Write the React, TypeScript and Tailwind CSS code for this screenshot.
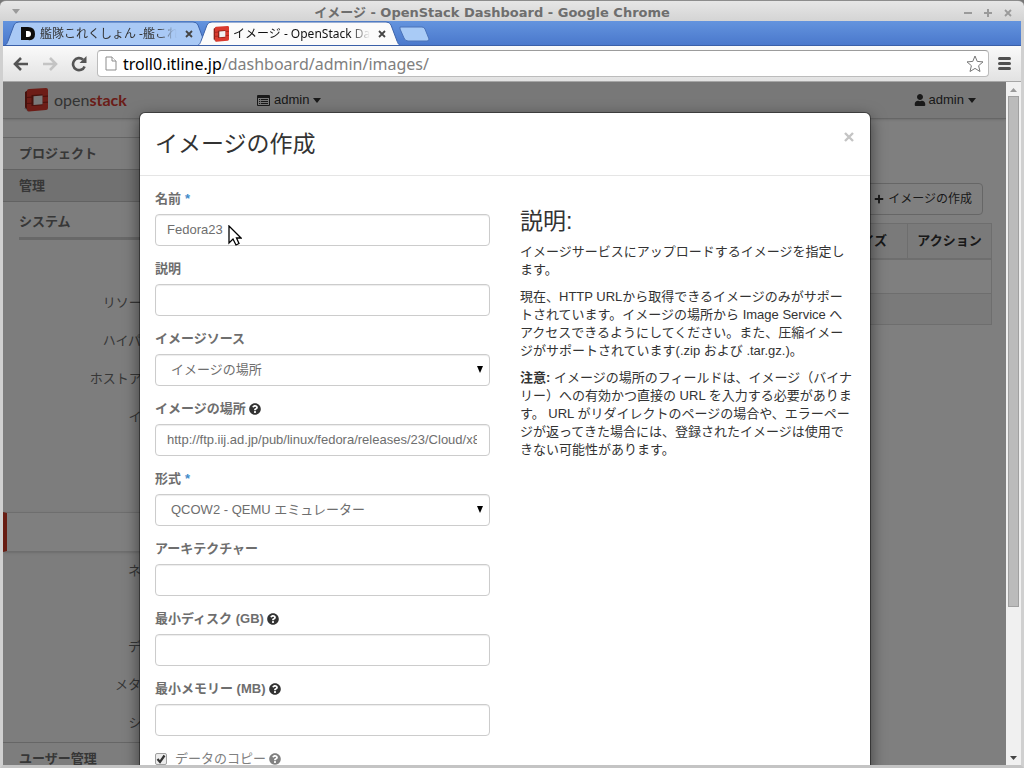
import React from "react";
import { FaPlus, FaQuestionCircle, FaUser } from "react-icons/fa";

const TAB_FONT = "font-['Noto_Sans','Noto_Sans_CJK_JP',sans-serif]";

const navItems = [
  { label: "概要" },
  { label: "リソース使用状況" },
  { label: "ハイパーバイザー" },
  { label: "ホストアグリゲート" },
  { label: "インスタンス" },
  { label: "ボリューム" },
  { label: "フレーバー" },
  { label: "イメージ", active: true },
  { label: "ネットワーク" },
  { label: "ルーター" },
  { label: "デフォルト値" },
  { label: "メタデータ定義" },
  { label: "システム情報" },
];

function OpenStackMark({ className }: { className: string }) {
  return (
    <svg viewBox="0 0 24 24" className={className} aria-hidden="true">
      <path d="M0 20l4 3.500 3-1-3-3z" fill="#000" opacity="0.25" />
      <path d="M1 4l3-2v20l-3-2.500z" fill="#8e2219" />
      <path d="M3 3Q3 1 5 1l17-1q2 0 2 2v18q0 2-2 2L5 23.500q-2 0-2-2z" fill="#da3a2e" />
      <path d="M3 9.500l5-.4M18 8.500l6-.4M3 15.500l5-.2M18 14.500l6-.4" stroke="#9a2319" strokeWidth="1.1" />
      <path d="M7.500 7l11-.8v11l-11 .8z" fill="#8e2219" />
      <path d="M9.500 8.200l9-.7v8.800l-9 .7z" fill="#f2f2f2" />
    </svg>
  );
}

function CloseGlyph({ className }: { className: string }) {
  return (
    <svg viewBox="0 0 8 8" className={className} aria-hidden="true">
      <path d="M1 1l6 6M7 1L1 7" stroke="currentColor" strokeWidth="1.8" />
    </svg>
  );
}

function TitleBar() {
  return (
    <header className="flex h-[21px] shrink-0 items-center overflow-hidden rounded-t-md border-t border-[#8c8c8c] bg-linear-to-b from-[#e6e6e6] to-[#d4d4d4] px-3 text-[#9a9a9a]">
      <div className="w-16">
        <svg viewBox="0 0 8 5" className="h-[5px] w-2" aria-hidden="true">
          <path d="M0 0h8L4 5z" fill="currentColor" />
        </svg>
      </div>
      <h1 className="flex-1 pt-1 pr-10 text-center font-['DejaVu_Sans','Noto_Sans_CJK_JP',sans-serif] text-[13px] leading-5 font-bold whitespace-nowrap text-[#6e6e6e]">
        イメージ - OpenStack Dashboard - Google Chrome
      </h1>
      <div className="flex w-16 items-center justify-end gap-3 pt-1">
        <button type="button" aria-label="最小化">
          <svg viewBox="0 0 8 8" className="size-2"><path d="M0 4h8" stroke="currentColor" strokeWidth="2" /></svg>
        </button>
        <button type="button" aria-label="最大化">
          <svg viewBox="0 0 8 8" className="size-2"><path d="M0 4h8M4 0v8" stroke="currentColor" strokeWidth="2" /></svg>
        </button>
        <button type="button" aria-label="閉じる">
          <CloseGlyph className="size-2" />
        </button>
      </div>
    </header>
  );
}

function Tab({ title, active, icon }: { title: string; active?: boolean; icon: React.ReactNode }) {
  return (
    <div className={active ? "relative z-10 -ml-[13px] h-[25px] w-[206px]" : "relative h-[25px] w-[206px]"}>
      <svg viewBox="0 0 206 25" preserveAspectRatio="none" className="absolute inset-0 size-full" aria-hidden="true">
        <path
          d="M0 25C4 24 4 22 5 20L11 4Q12 1 16 1H190Q194 1 195 4L201 20C202 22 202 24 206 25z"
          fill={active ? "#fbfbfb" : "#a9c9f5"}
          stroke="#3d64ac"
          strokeWidth="1"
        />
      </svg>
      <div className="relative flex h-full items-center pr-4 pl-[17px]">
        {icon}
        <span
          className={
            (active ? "text-[#111] " : "text-[#333] ") +
            "ml-1 flex-1 overflow-hidden mask-r-from-85% text-xs whitespace-nowrap " +
            TAB_FONT
          }
        >
          {title}
        </span>
        <button type="button" aria-label="タブを閉じる" className="ml-2 text-[#444]">
          <CloseGlyph className="size-2" />
        </button>
      </div>
    </div>
  );
}

function TabStrip() {
  return (
    <nav className="flex h-[25px] shrink-0 overflow-hidden border-b border-[#3a5fa8] bg-linear-to-b from-[#6494de] to-[#4a78cc]">
      <Tab
        title="艦隊これくしょん -艦これ"
        icon={
          <svg viewBox="0 0 16 16" className="size-4 shrink-0" aria-hidden="true">
            <path d="M1 1h7q7 0 7 7t-7 6H1z" fill="#0c0c0c" />
            <path d="M6 5h2q3 0 3 3t-3 3H6z" fill="#fff" />
          </svg>
        }
      />
      <Tab active title="イメージ - OpenStack Dashboard" icon={<OpenStackMark className="size-4 shrink-0" />} />
      <button type="button" aria-label="新しいタブ" className="-ml-1 h-6">
        <svg viewBox="0 0 32 24" className="h-6 w-8">
          <path d="M2 6h22q2 0 3 2l4 10q0 2-2 2H10q-3 0-4-3L2 8z" fill="#a9cbf6" stroke="#4a72b8" strokeWidth="1" />
        </svg>
      </button>
    </nav>
  );
}

function Toolbar() {
  return (
    <div className="flex h-9 shrink-0 items-center border-b border-[#a6a6a6] bg-linear-to-b from-[#fafafa] to-[#e2e2e2] px-[10px] text-[#555]">
      <button type="button" aria-label="戻る">
        <svg viewBox="0 0 16 14" className="h-[14px] w-4" fill="none" stroke="currentColor" strokeWidth="2.6">
          <path d="M15 7H3M8 1L2 7l6 6" />
        </svg>
      </button>
      <button type="button" aria-label="進む" className="ml-[13px] text-[#c4c4c4]">
        <svg viewBox="0 0 16 14" className="h-[14px] w-4" fill="none" stroke="currentColor" strokeWidth="2.6">
          <path d="M1 7h12M8 1l6 6-6 6" />
        </svg>
      </button>
      <button type="button" aria-label="再読み込み" className="ml-[13px]">
        <svg viewBox="0 0 16 16" className="size-4" fill="none">
          <path d="M13.6 10.4A6 6 0 1 1 12 3.6" stroke="currentColor" strokeWidth="2.6" />
          <path d="M15.5 0v7h-7z" fill="currentColor" />
        </svg>
      </button>
      <div className="ml-[10px] flex h-[27px] flex-1 items-center rounded-sm border border-t-[#9c9c9c] border-[#bcbcbc] bg-white pr-1 pl-[7px]">
        <svg viewBox="0 0 12 15" className="h-[15px] w-3" fill="#fff" stroke="#8d8d8d" aria-hidden="true">
          <path d="M1 1h6l4 4v9H1z" />
          <path d="M7 1v4h4" />
        </svg>
        <a href="#url" className={"ml-[6px] flex-1 text-base leading-5 text-[#808080] " + TAB_FONT}>
          <span className="text-black">troll0.itline.jp</span>/dashboard/admin/images/
        </a>
        <button type="button" aria-label="ブックマーク">
          <svg viewBox="0 0 18 18" className="size-[18px]" fill="#fff" stroke="#777" strokeLinejoin="round">
            <path d="M9 1l2.2 5.4 5.8.5-4.4 3.8L14 16.500 9 13.400 4 16.500l1.400-5.800L1 6.900l5.800-.5z" />
          </svg>
        </button>
      </div>
      <button type="button" aria-label="メニュー" className="ml-[9px]">
        <svg viewBox="0 0 13 13" className="size-[13px]" stroke="#505050" strokeWidth="3" strokeLinecap="round">
          <path d="M1.500 1.500h10M1.500 6.500h10M1.500 11.500h10" />
        </svg>
      </button>
    </div>
  );
}

function Caret() {
  return (
    <svg viewBox="0 0 8 5" className="ml-1 h-[5px] w-2" aria-hidden="true">
      <path d="M0 0h8L4 5z" fill="currentColor" />
    </svg>
  );
}

function Navbar() {
  return (
    <div className="flex h-[37px] items-center border-b border-[#ccc] bg-[#f0f0f0] text-[#333] shadow-sm">
      <a href="#home" className="ml-[21px] flex w-[233px] items-center">
        <OpenStackMark className="size-6" />
        <span className="ml-[6px] font-['Lato','Open_Sans',sans-serif] text-base leading-6 text-[#666]">
          open<span className="font-bold text-[#d43a30]">stack</span>
        </span>
      </a>
      <button type="button" className="flex items-center">
        <svg viewBox="0 0 13 11" className="h-[11px] w-[13px]" aria-hidden="true">
          <path d="M1 0h11q1 0 1 1v9q0 1-1 1H1q-1 0-1-1V1q0-1 1-1zM1 3v7h11V3z" fill="currentColor" fillRule="evenodd" />
          <path d="M2 4.500h1.200M4 4.500h7M2 6.500h1.200M4 6.500h7M2 8.500h1.200M4 8.500h7" stroke="currentColor" />
        </svg>
        <span className="ml-1">admin</span>
        <Caret />
      </button>
      <button type="button" className="mr-[30px] ml-auto flex items-center">
        <FaUser className="size-3" />
        <span className="ml-[3px]">admin</span>
        <Caret />
      </button>
    </div>
  );
}

function Sidebar() {
  return (
    <nav className="mt-[18px] w-[220px] shrink-0 border-r border-[#ddd] bg-[#fafafa] text-[#6e6e6e]">
      <a href="#project" className="flex h-8 items-center border-t border-[#ccc] px-4 font-bold">プロジェクト</a>
      <a href="#admin" className="flex h-[33px] items-center border-y border-[#c4c4c4] bg-[#e3e3e3] px-4 font-bold">管理</a>
      <div className="ml-4 h-[38px] border-b-3 border-[#d0d0d0] pt-[11px] font-bold">システム</div>
      <ul className="mt-[6px]">
        {navItems.map((item) =>
          item.active ? (
            <li key={item.label} className="flex h-10 items-center justify-end border-y border-l-4 border-y-[#ddd] border-l-[#d13a26] bg-white pr-4 shadow-sm">
              <a href="#images">{item.label}</a>
            </li>
          ) : (
            <li key={item.label} className="flex h-[38px] items-center justify-end pr-4">
              <a href="#panel">{item.label}</a>
            </li>
          )
        )}
      </ul>
      <a href="#identity" className="flex h-8 items-center border-t border-[#ccc] px-4 font-bold">ユーザー管理</a>
    </nav>
  );
}

function ImagesPanel() {
  return (
    <main className="flex-1 pt-16 pr-[14px] pl-4">
      <button type="button" className="mr-[9px] ml-auto flex h-8 items-center rounded-sm border border-[#ccc] px-[10px] text-xs text-[#333]">
        <FaPlus className="size-[10px]" />
        <span className="ml-1">イメージの作成</span>
      </button>
      <table className="mt-2 w-full border-collapse border border-[#ddd] text-left text-[#333]">
        <thead>
          <tr className="h-[35px] border-b-2 border-[#ddd] bg-[#f5f5f5]">
            <th className="px-2 text-right">
              <span className="pr-3">サイズ</span>
            </th>
            <th className="w-[84px] border-l border-[#ddd] text-center">アクション</th>
          </tr>
        </thead>
        <tbody>
          <tr className="h-[35px]">
            <td colSpan={2} />
          </tr>
        </tbody>
        <tfoot>
          <tr className="h-[31px] border-t border-[#ddd] bg-[#f5f5f5]">
            <td colSpan={2} />
          </tr>
        </tfoot>
      </table>
    </main>
  );
}

const CONTROL =
  "block h-8 w-full rounded-sm border border-[#ccc] bg-white text-[13px] text-[#6e6e6e] shadow-[inset_0_1px_1px_rgba(0,0,0,0.075)] outline-none";

type FieldProps = { id: string; label: string; required?: boolean; help?: boolean; value?: string; options?: string[] };

function Field({ id, label, required, help, value, options }: FieldProps) {
  return (
    <div className="mb-[14px]">
      <label htmlFor={id} className="mb-[6px] flex h-[18px] items-center font-bold text-[#6e6e6e]">
        {label}
        {required && <span className="ml-1 text-[#428bca]">*</span>}
        {help && <FaQuestionCircle className="ml-[3px] size-3 text-[#333]" />}
      </label>
      {options ? (
        <div className="relative">
          <select id={id} className={CONTROL + " appearance-none pr-8 pl-[15px]"}>
            {options.map((option) => (
              <option key={option}>{option}</option>
            ))}
          </select>
          <svg viewBox="0 0 6 7" className="pointer-events-none absolute top-3 right-[7px] h-[7px] w-[6px]" aria-hidden="true">
            <path d="M0 0h6L3 7z" fill="#000" />
          </svg>
        </div>
      ) : (
        <input id={id} type="text" defaultValue={value} className={CONTROL + " pr-3 pb-[2px] pl-[11px]"} />
      )}
    </div>
  );
}

function CreateImageDialog() {
  return (
    <div className="absolute inset-0 flex items-start justify-center overflow-hidden bg-black/50 pt-[30px] pl-px">
      <section
        role="dialog"
        aria-labelledby="dialog-title"
        className="relative w-full max-w-[732px] rounded-md border border-black/40 bg-white bg-clip-padding shadow-[0_5px_15px_rgba(0,0,0,0.5)]"
      >
        <div className="flex h-[63px] items-start justify-between border-b border-[#e5e5e5] px-[15px] pt-[15px]">
          <h2 id="dialog-title" className="text-[23px] leading-8">イメージの作成</h2>
          <button type="button" aria-label="閉じる" className="mt-[3px] text-[#c4c4c4]">
            <svg viewBox="0 0 12 12" className="size-3">
              <path d="M2 2l8 8M10 2l-8 8" stroke="currentColor" strokeWidth="2.400" />
            </svg>
          </button>
        </div>
        <div className="grid grid-cols-2 gap-[30px] px-[15px] pt-[14px] pb-[15px]">
          <form>
            <Field id="name" label="名前" required value="Fedora23" />
            <Field id="description" label="説明" />
            <Field id="source" label="イメージソース" options={["イメージの場所"]} />
            <Field id="location" label="イメージの場所" help value="http://ftp.iij.ad.jp/pub/linux/fedora/releases/23/Cloud/x86_64/" />
            <Field id="format" label="形式" required options={["QCOW2 - QEMU エミュレーター"]} />
            <Field id="architecture" label="アーキテクチャー" />
            <Field id="min-disk" label="最小ディスク (GB)" help />
            <Field id="min-ram" label="最小メモリー (MB)" help />
            <div className="flex h-[18px] items-center text-[#808080]">
              <span className="relative size-3">
                <input
                  id="copy-data"
                  type="checkbox"
                  defaultChecked
                  className="block size-3 appearance-none rounded-xs border border-[#a0a0a0] bg-[#ececec]"
                />
                <svg viewBox="0 0 12 12" className="pointer-events-none absolute inset-0 size-3" aria-hidden="true">
                  <path d="M2.500 6l2.500 3 4.500-6.500" fill="none" stroke="#333" strokeWidth="2.200" />
                </svg>
              </span>
              <label htmlFor="copy-data" className="ml-2 flex items-center">
                データのコピー
                <FaQuestionCircle className="ml-[3px] size-3" />
              </label>
            </div>
          </form>
          <div className="pt-[19px]">
            <h3 className="mb-[9px] text-[23px] leading-[25px]">説明:</h3>
            <p className="mb-[9px]">イメージサービスにアップロードするイメージを指定します。</p>
            <p className="mb-[9px]">
              現在、HTTP URLから取得できるイメージのみがサポートされています。イメージの場所から Image Service へアクセスできるようにしてください。また、圧縮イメージがサポートされています(.zip および .tar.gz.)。
            </p>
            <p>
              <strong>注意:</strong> イメージの場所のフィールドは、イメージ（バイナリー）への有効かつ直接の URL を入力する必要があります。 URL がリダイレクトのページの場合や、エラーページが返ってきた場合には、登録されたイメージは使用できない可能性があります。
            </p>
          </div>
        </div>
        <svg viewBox="0 0 14 22" className="pointer-events-none absolute top-28 left-[88px] h-[22px] w-[14px]" aria-hidden="true">
          <path d="M1 1v17l4-4 3 6 3-1.500L8.500 13H13z" fill="#fff" stroke="#000" strokeWidth="1.300" />
        </svg>
      </section>
    </div>
  );
}

function ScrollTrack() {
  return (
    <div className="flex w-[15px] shrink-0 flex-col items-center bg-[#f0f0f0]" aria-hidden="true">
      <svg viewBox="0 0 15 14" className="h-[14px] w-[15px] shrink-0"><path d="M4 10h7L7.500 6z" fill="#999" /></svg>
      <div className="min-h-0 w-full flex-1 px-[2px]">
        <div className="h-[78%] border border-[#a0a0a0] bg-[#bbb]" />
      </div>
      <svg viewBox="0 0 15 14" className="h-[14px] w-[15px] shrink-0"><path d="M4 5h7L7.500 9z" fill="#444" /></svg>
    </div>
  );
}

export default function App() {
  return (
    <div className="flex h-screen flex-col overflow-hidden bg-[#777] font-['Liberation_Sans','Noto_Sans_CJK_JP',sans-serif] text-[13px] leading-[18px] text-[#333]">
      <TitleBar />
      <div className="flex min-h-0 flex-1 flex-col border-x-3 border-b-3 border-x-[#d0d0d0] border-b-[#c4c4c4]">
        <TabStrip />
        <Toolbar />
        <div className="flex min-h-0 flex-1">
          <div className="relative min-w-0 flex-1 overflow-hidden bg-white">
            <Navbar />
            <div className="flex">
              <Sidebar />
              <ImagesPanel />
            </div>
            <CreateImageDialog />
          </div>
          <ScrollTrack />
        </div>
      </div>
    </div>
  );
}
